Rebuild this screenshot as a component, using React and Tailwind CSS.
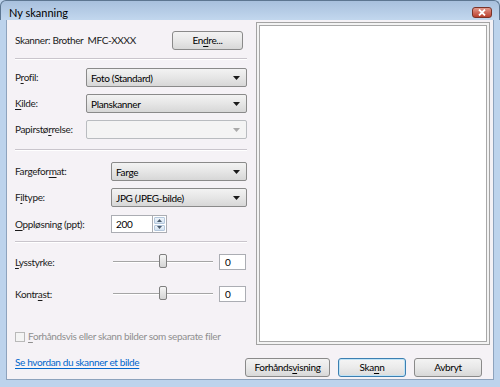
import { useState } from 'react'

const FONT = { fontFamily: 'Lato, "Noto Sans", "DejaVu Sans", sans-serif' }

function U({ children }) {
  return <span className="underline underline-offset-[2px]">{children}</span>
}

function Arrow({ disabled }) {
  return (
    <svg width="7" height="4" viewBox="0 0 7 4" className="shrink-0">
      <path d="M0 0h7L3.5 4z" fill={disabled ? '#a9a9a9' : '#1a1a1a'} />
    </svg>
  )
}

function Select({ value, disabled, className = '' }) {
  return (
    <div
      className={`h-[19px] flex items-center justify-between pl-[4px] pr-[6px] rounded-[2px] border ${
        disabled
          ? 'border-[#b9bcc0] bg-[#f4f4f4]'
          : 'border-[#8a8a8a] bg-gradient-to-b from-[#f3f3f3] via-[#e6e6e6] to-[#d7d7d7]'
      } ${className}`}
    >
      <span className="text-[10px] text-black leading-none">{value}</span>
      <Arrow disabled={disabled} />
    </div>
  )
}

function Button({ children, focused, className = '' }) {
  return (
    <div
      className={`h-[19px] flex items-center justify-center rounded-[3px] border text-[10px] text-black ${
        focused
          ? 'border-[#3c7fb1] shadow-[inset_0_0_0_1px_#bfe3f6] bg-gradient-to-b from-[#f5f5f5] via-[#ebebeb] to-[#dcdcdc]'
          : 'border-[#8a8a8a] bg-gradient-to-b from-[#f3f3f3] via-[#e8e8e8] to-[#d8d8d8]'
      } ${className}`}
    >
      {children}
    </div>
  )
}

function Slider({ value }) {
  return (
    <div className="relative w-[100px] h-[16px] flex items-center">
      <div className="w-full h-[2px] border-t border-[#a5a5a5] border-b border-b-[#ffffff] bg-[#d6d6d6]" />
      <div
        className="absolute top-[0px] w-[8px] h-[14px] rounded-[2px] border border-[#7f7f7f] bg-gradient-to-b from-[#f6f6f6] to-[#d4d4d4]"
        style={{ left: `${value}%`, transform: 'translateX(-50%)' }}
      />
    </div>
  )
}

function Sep({ className = '' }) {
  return <div className={`h-px bg-[#c9c5cc] border-b border-white box-content ${className}`} />
}

export default function App() {
  const [checked] = useState(false)

  return (
    <div className="w-[500px] h-[387px] bg-[#bdd3ec] flex flex-col overflow-hidden" style={FONT}>
      <div className="relative h-[20px] shrink-0 rounded-t-[6px] border-t border-x border-[#5d7691] bg-gradient-to-b from-[#a8c0dd] to-[#c2d7ee]">
        <span className="absolute left-[8px] top-[6px] text-[11px] leading-none text-black">Ny skanning</span>
        <div className="absolute right-[7px] top-[6px] w-[20px] h-[11px] rounded-[3px] border border-[#7a3328] bg-gradient-to-b from-[#e19a8d] via-[#cf6a5b] to-[#b9412f] flex items-center justify-center">
          <svg width="8" height="7" viewBox="0 0 8 7">
            <path d="M1 0.5L7 6.5M7 0.5L1 6.5" stroke="#ffffff" strokeWidth="1.8" />
          </svg>
        </div>
      </div>

      <div className="flex-1 mx-[6px] mb-[7px] bg-[#f5f2f6] border-x border-b border-[#8ea3bd] flex flex-col tracking-[-0.35px]">
        <div className="flex pl-[8px] pr-[2px]">
          <div className="w-[232px] flex flex-col text-[10px] text-[#1a1a1a]">
            <div className="mt-[12px] h-[16px] flex items-center justify-between">
              <span>Skanner: Brother&nbsp; MFC-XXXX</span>
              <Button className="w-[71px] mr-[4px] h-[16px]">
                En<U>d</U>re...
              </Button>
            </div>

            <Sep className="mt-[10px]" />

            <div className="mt-[8px] flex items-center">
              <span className="w-[71px]">
                P<U>r</U>ofil:
              </span>
              <Select value="Foto (Standard)" className="flex-1" />
            </div>
            <div className="mt-[7px] flex items-center">
              <span className="w-[71px]">
                <U>K</U>ilde:
              </span>
              <Select value="Planskanner" className="flex-1" />
            </div>
            <div className="mt-[7px] flex items-center">
              <span className="w-[71px]">
                Papirstø<U>r</U>relse:
              </span>
              <Select value="" disabled className="flex-1" />
            </div>

            <Sep className="mt-[10px]" />

            <div className="mt-[11px] flex items-center">
              <span className="w-[96px]">
                Fargefor<U>m</U>at:
              </span>
              <Select value="Farge" className="flex-1" />
            </div>
            <div className="mt-[7px] flex items-center">
              <span className="w-[96px]">
                F<U>i</U>ltype:
              </span>
              <Select value="JPG (JPEG-bilde)" className="flex-1" />
            </div>
            <div className="mt-[8px] flex items-center">
              <span className="w-[96px]">
                <U>O</U>ppløsning (ppt):
              </span>
              <div className="flex h-[18px]">
                <div className="w-[42px] h-full bg-white border border-[#abadb3] pl-[4px] flex items-center text-black">200</div>
                <div className="w-[14px] h-full flex flex-col border border-l-0 border-[#abadb3] bg-white p-[1px] gap-[1px]">
                  <div className="flex-1 rounded-[1px] bg-gradient-to-b from-[#eef4fa] to-[#d3e2f1] border border-[#b4c7dc] flex items-center justify-center">
                    <svg width="5" height="3" viewBox="0 0 5 3">
                      <path d="M0 3h5L2.5 0z" fill="#4a5b6d" />
                    </svg>
                  </div>
                  <div className="flex-1 rounded-[1px] bg-gradient-to-b from-[#eef4fa] to-[#d3e2f1] border border-[#b4c7dc] flex items-center justify-center">
                    <svg width="5" height="3" viewBox="0 0 5 3">
                      <path d="M0 0h5L2.5 3z" fill="#4a5b6d" />
                    </svg>
                  </div>
                </div>
              </div>
            </div>

            <Sep className="mt-[8px]" />

            <div className="mt-[11px] h-[16px] flex items-center">
              <span className="w-[98px]">
                <U>L</U>ysstyrke:
              </span>
              <Slider value={50} />
              <div className="ml-[6px] w-[27px] h-[16px] bg-white border border-[#abadb3] pl-[5px] flex items-center text-black">0</div>
            </div>
            <div className="mt-[16px] h-[16px] flex items-center">
              <span className="w-[98px]">
                Kontr<U>a</U>st:
              </span>
              <Slider value={50} />
              <div className="ml-[6px] w-[27px] h-[16px] bg-white border border-[#abadb3] pl-[5px] flex items-center text-black">0</div>
            </div>

            <div className="mt-[29px] h-[11px] flex items-center gap-[3px] whitespace-nowrap">
              <div className="w-[10px] h-[10px] shrink-0 border border-[#b9b9b9] bg-[#f4f4f4]">{checked ? '✓' : null}</div>
              <span className="text-[#8f8f8f]">
                <U>F</U>orhåndsvis eller skann bilder som separate filer
              </span>
            </div>
          </div>

          <div className="ml-[9px] mt-[2px] w-[234px] h-[323px] border border-[#a3a3a3] p-[2px] bg-[#f3f3f3]">
            <div className="w-full h-full border border-[#a8a8a8] bg-white" />
          </div>
        </div>

        <div className="mt-[13px] flex items-center pl-[8px] pr-[11px]">
          <a className="self-start -mt-[2px] leading-[12px] text-[10px] text-[#0066cc] underline underline-offset-[2px] mr-auto">
            Se hvordan du skanner et bilde
          </a>
          <Button className="w-[85px]">
            Forhånds<U>v</U>isning
          </Button>
          <Button focused className="w-[68px] ml-[8px]">
            Ska<U>n</U>n
          </Button>
          <Button className="w-[68px] ml-[8px]">Avbryt</Button>
        </div>
      </div>
    </div>
  )
}
